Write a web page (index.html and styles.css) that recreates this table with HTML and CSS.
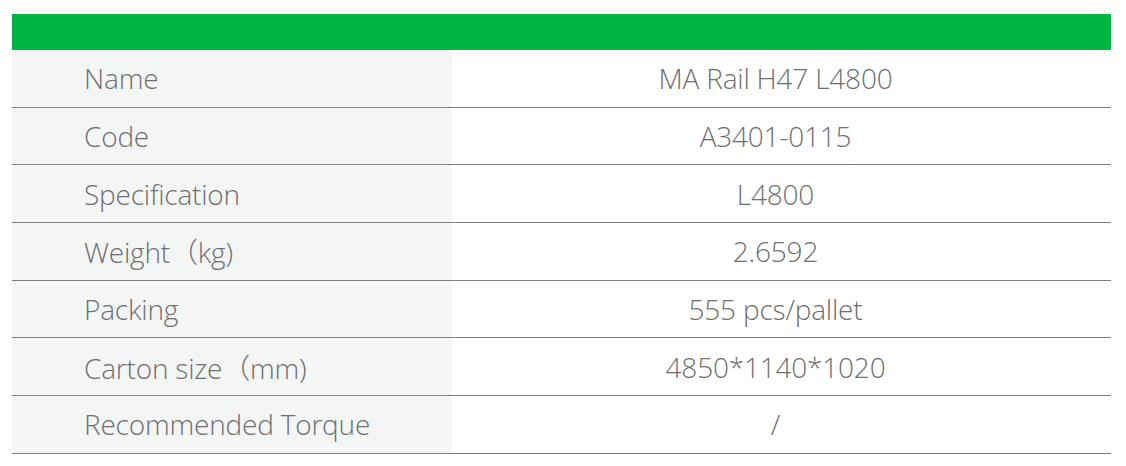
FILE: index.html
```html
<!DOCTYPE html>
<html>
<head>
<meta charset="utf-8">
<link rel="stylesheet" href="styles.css">
</head>
<body>
<div class="spec">
  <div class="spec-head"></div>
  <div class="spec-row"><div class="spec-key">Name</div><div class="spec-val">MA Rail H47 L4800</div></div>
  <div class="spec-row"><div class="spec-key">Code</div><div class="spec-val">A3401-0115</div></div>
  <div class="spec-row"><div class="spec-key">Specification</div><div class="spec-val">L4800</div></div>
  <div class="spec-row"><div class="spec-key">Weight（kg)</div><div class="spec-val">2.6592</div></div>
  <div class="spec-row"><div class="spec-key">Packing</div><div class="spec-val">555 pcs/pallet</div></div>
  <div class="spec-row"><div class="spec-key">Carton size（mm)</div><div class="spec-val">4850*1140*1020</div></div>
  <div class="spec-row"><div class="spec-key">Recommended Torque</div><div class="spec-val">/</div></div>
</div>
</body>
</html>
```
FILE: styles.css
```css
html, body {
  margin: 0;
  padding: 0;
  background: #ffffff;
}
body {
  padding: 14px 15px 0 12px;
  font-family: "Open Sans", "Noto Sans CJK SC", sans-serif;
  font-weight: 300;
  color: #6f6f6f;
}
.spec {
  width: 1099px;
}
.spec-head {
  height: 36px;
  background: #00b441;
}
.spec-row {
  display: grid;
  grid-template-columns: 440px 1fr;
  height: 57.7px;
  box-sizing: border-box;
  border-bottom: 1px solid #808080;
  font-size: 28px;
  letter-spacing: -0.2px;
}
.spec-key {
  background: #f4f6f6;
  display: flex;
  align-items: center;
  padding-left: 72px;
}
.spec-val {
  display: flex;
  align-items: center;
  justify-content: center;
  padding-right: 12px;
}
```
